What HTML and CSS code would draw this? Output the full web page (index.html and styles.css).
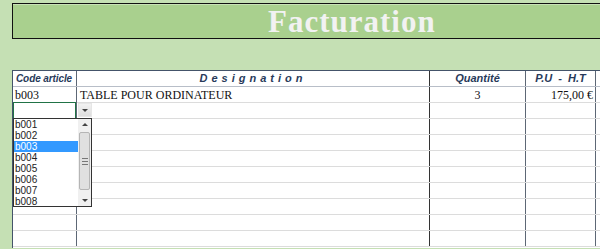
FILE: index.html
```html
<!DOCTYPE html>
<html lang="fr">
<head>
  <meta charset="UTF-8" />
  <title>Facturation</title>
  <link rel="stylesheet" href="styles.css">
</head>
<body>
  <div class="title">Facturation</div>

  <div class="sheet">
    <div class="row head">
      <div class="cell c1">Code article</div>
      <div class="cell c2 spaced">Designation</div>
      <div class="cell c3">Quantité</div>
      <div class="cell c4">P.U  -  H.T</div>
      <div class="cell c5"></div>
    </div>
    <div class="row data">
      <div class="cell c1">b003</div>
      <div class="cell c2">TABLE POUR ORDINATEUR</div>
      <div class="cell c3 center">3</div>
      <div class="cell c4 right">175,00 €</div>
      <div class="cell c5"></div>
    </div>
    <div class="row"><div class="cell c1 active"></div><div class="cell c2"></div><div class="cell c3"></div><div class="cell c4"></div><div class="cell c5"></div></div>
    <div class="row"><div class="cell c1"></div><div class="cell c2"></div><div class="cell c3"></div><div class="cell c4"></div><div class="cell c5"></div></div>
    <div class="row"><div class="cell c1"></div><div class="cell c2"></div><div class="cell c3"></div><div class="cell c4"></div><div class="cell c5"></div></div>
    <div class="row"><div class="cell c1"></div><div class="cell c2"></div><div class="cell c3"></div><div class="cell c4"></div><div class="cell c5"></div></div>
    <div class="row"><div class="cell c1"></div><div class="cell c2"></div><div class="cell c3"></div><div class="cell c4"></div><div class="cell c5"></div></div>
    <div class="row"><div class="cell c1"></div><div class="cell c2"></div><div class="cell c3"></div><div class="cell c4"></div><div class="cell c5"></div></div>
    <div class="row"><div class="cell c1"></div><div class="cell c2"></div><div class="cell c3"></div><div class="cell c4"></div><div class="cell c5"></div></div>
    <div class="row"><div class="cell c1"></div><div class="cell c2"></div><div class="cell c3"></div><div class="cell c4"></div><div class="cell c5"></div></div>
    <div class="row"><div class="cell c1"></div><div class="cell c2"></div><div class="cell c3"></div><div class="cell c4"></div><div class="cell c5"></div></div>

    <div class="dropbtn"><span class="tri"></span></div>

    <div class="droplist">
      <ul class="items">
        <li>b001</li>
        <li>b002</li>
        <li class="sel">b003</li>
        <li>b004</li>
        <li>b005</li>
        <li>b006</li>
        <li>b007</li>
        <li>b008</li>
      </ul>
      <div class="scroll">
        <div class="arrow"><span class="tri up"></span></div>
        <div class="track"><div class="thumb"><span></span><span></span><span></span></div></div>
        <div class="arrow"><span class="tri"></span></div>
      </div>
    </div>
  </div>
</body>
</html>
```

FILE: styles.css
```css
body {
  margin: 0;
  background: #c5e0b4;
  font-family: "Liberation Sans", Arial, sans-serif;
  overflow: hidden;
  height: 249px;
}

.title {
  margin: 3px 0 0 12px;
  height: 34px;
  border: 1px solid #111;
  border-right: none;
  box-shadow: inset 0 1px 0 #c8e2b6;
  background: #a9d08e;
  color: #f2f2f2;
  font-family: "Liberation Serif", "Times New Roman", serif;
  font-weight: bold;
  font-size: 31px;
  letter-spacing: 1px;
  line-height: 35px;
  padding-left: 255px;
}

.sheet {
  position: relative;
  margin: 31px 0 0 12px;
  background: #fff;
  border-left: 1px solid #44546a;
  height: 178px;
  overflow: hidden;
}

.row {
  display: grid;
  grid-template-columns: 64px 353px 96px 70px 1fr;
  height: 15px;
  border-bottom: 1px solid #dcdcdc;
}

.row.head {
  border-top: 1px solid #44546a;
  border-bottom: 1px solid #b8bec8;
}

.cell {
  border-right: 1px solid #5d6775;
  padding: 0 2px;
  font-size: 11px;
  line-height: 15px;
  white-space: nowrap;
  overflow: hidden;
}

.c2 {
  border-right-color: #333;
}

.c5 {
  border-right: none;
}

.head .cell {
  font-weight: bold;
  font-style: italic;
  color: #283a5a;
  font-size: 11px;
  text-align: center;
}

.head .c1 {
  text-align: left;
  padding-left: 3px;
  font-size: 10px;
  letter-spacing: -0.1px;
}

.head .spaced {
  letter-spacing: 4px;
}

.head .c4 {
  white-space: pre;
}

.data .cell {
  font-family: "Liberation Serif", "Times New Roman", serif;
  font-size: 12px;
  color: #111;
  line-height: 17px;
}

.data .c1 {
  padding-left: 2px;
}

.data .c2 {
  padding-left: 3px;
}

.center {
  text-align: center;
}

.right {
  text-align: right;
}

.active {
  box-shadow: inset 0 0 0 1px #217346;
  margin: -1px 0 -1px 0;
  height: 17px;
}

.tri {
  display: inline-block;
  width: 0;
  height: 0;
  border-left: 3px solid transparent;
  border-right: 3px solid transparent;
  border-top: 3px solid #444;
}

.tri.up {
  border-top: none;
  border-bottom: 3px solid #444;
}

.dropbtn {
  position: absolute;
  left: 65px;
  top: 33px;
  width: 14px;
  height: 14px;
  background: linear-gradient(#f2f2f2, #dedede);
  border: 1px solid #e6e6e6;
  box-sizing: border-box;
  display: flex;
  align-items: center;
  justify-content: center;
}

.droplist {
  position: absolute;
  left: 0;
  top: 48px;
  width: 79px;
  height: 89px;
  box-sizing: border-box;
  border: 1px solid #333;
  background: #fff;
  display: flex;
}

.items {
  list-style: none;
  margin: 0;
  padding: 0;
  flex: 1;
  font-size: 10px;
  color: #222;
}

.items li {
  height: 11px;
  line-height: 11px;
  padding-left: 1px;
}

.items li.sel {
  background: #3399ff;
  color: #fff;
}

.scroll {
  width: 13px;
  display: flex;
  flex-direction: column;
  background: #f0f0f0;
}

.arrow {
  height: 11px;
  display: flex;
  align-items: center;
  justify-content: center;
}

.track {
  flex: 1;
  padding: 2px 1px;
}

.thumb {
  height: 56px;
  background: #e0e0e0;
  border: 1px solid #b5b5b5;
  border-radius: 2px;
  display: flex;
  flex-direction: column;
  align-items: center;
  justify-content: center;
  gap: 2px;
}

.thumb span {
  width: 6px;
  height: 1px;
  background: #777;
}
```
